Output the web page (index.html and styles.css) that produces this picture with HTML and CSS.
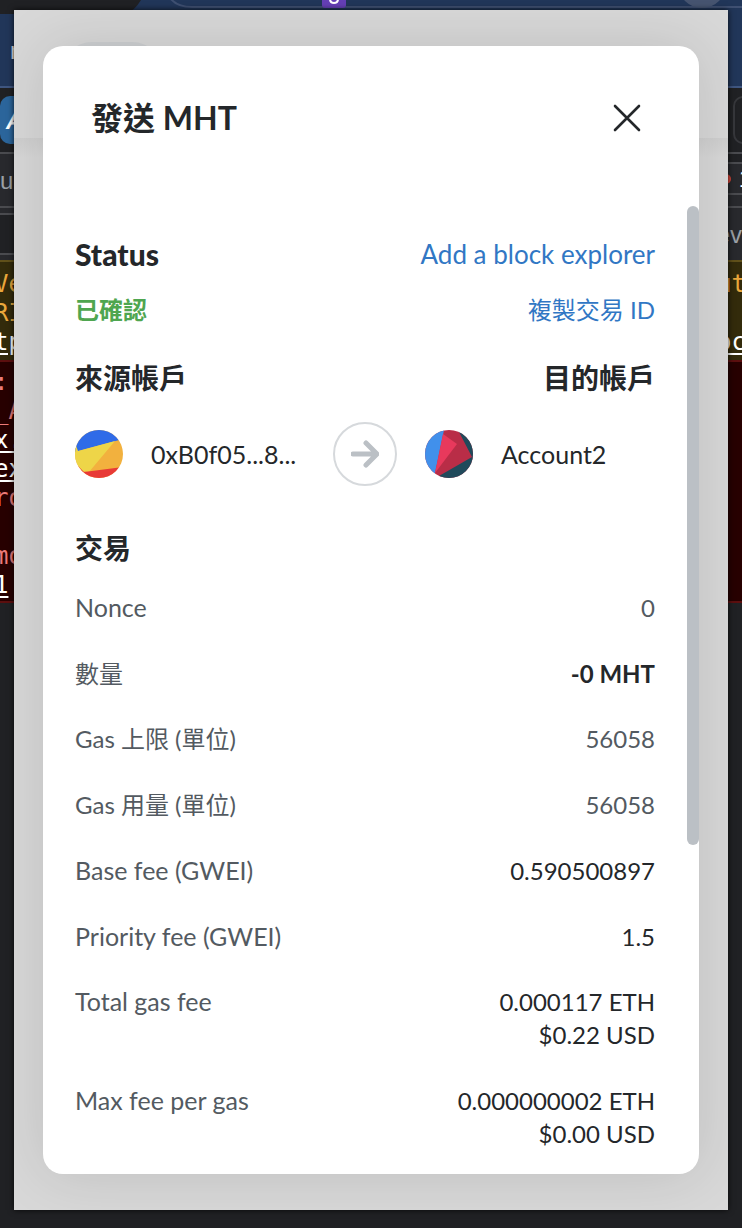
FILE: index.html
```html
<!DOCTYPE html>
<html lang="zh-Hant">
<head>
<meta charset="utf-8">
<meta name="viewport" content="width=device-width, initial-scale=1">
<title>發送 MHT</title>
<link rel="stylesheet" href="styles.css">
</head>
<body>
<div class="screen">
  <div class="desktop" aria-hidden="true">
    <div class="toolbar">
      <svg class="toolbar-top" viewBox="0 0 742 14" width="742" height="14">
        <path d="M0 0H141Q135 10 126 14H0Z" fill="#202124"/>
        <path d="M170 -2Q177 7 192 7H742" fill="none" stroke="#3f5072" stroke-width="2"/>
        <circle cx="702" cy="-16" r="24" fill="#465470"/>
        <rect x="322" y="-10" width="24" height="18" rx="3" fill="#653fb5"/>
        <path d="M330 -1Q330 3 334 3Q338 3 338 -1" fill="none" stroke="#fff" stroke-width="2"/>
      </svg>
      <span class="toolbar-text">n</span>
    </div>
    <div class="bookmarks"><span class="chip-blue">A</span><span class="chip-outline"></span></div>
    <div class="panels">
      <div class="panel-col">
        <div class="pane tall">u</div>
        <div class="pane slim"></div>
        <div class="pane dark"></div>
        <div class="pane slim"></div>
      </div>
      <div class="panel-col right">
        <div class="pane dark thin"></div>
        <div class="pane issues"><span class="dot"></span>1</div>
        <div class="pane strip"></div>
        <div class="pane levels">ev</div>
      </div>
    </div>
    <div class="log warn">
      <div class="log-col"><span>Ve</span><span>RI</span><u>tp</u></div>
      <div class="log-col right"><span>ut</span><span>&nbsp;</span><u>oc</u></div>
    </div>
    <div class="log error">
      <div class="log-col"><span>:</span><span>_A</span><u>x.</u><u>ex</u><span>ro</span><span>&nbsp;</span><span>mo</span><u>1</u></div>
    </div>
  </div>

  <div class="popup">
    <div class="popup-page" aria-hidden="true"><div class="popup-top"><span class="network-pill"></span></div></div>
    <main class="modal">
      <header class="modal-header">
        <h1>發送 MHT</h1>
        <button class="close" type="button" aria-label="關閉">
          <svg viewBox="0 0 28 28" width="28" height="28"><path d="M2 2L26 26M26 2L2 26" fill="none" stroke="#24272a" stroke-width="2.6" stroke-linecap="round"/></svg>
        </button>
      </header>
      <div class="modal-body">
        <div class="content">
          <div class="line status-line"><h2 class="heavy">Status</h2><a class="explorer" href="#explorer">Add a block explorer</a></div>
          <div class="line"><strong class="confirmed">已確認</strong><a href="#copy">複製交易 ID</a></div>
          <div class="line heads"><h2>來源帳戶</h2><h2>目的帳戶</h2></div>
          <div class="accounts">
            <div class="account">
              <svg class="avatar" viewBox="0 0 48 48" width="48" height="48">
                <clipPath id="c1"><circle cx="24" cy="24" r="24"/></clipPath>
                <g clip-path="url(#c1)"><rect width="48" height="48" fill="#f2b13e"/>
                <path d="M0 0H48V9L0 22Z" fill="#2f6be8"/>
                <path d="M0 13L3 21L40 11L14 42L8 41L0 33Z" fill="#eed548"/>
                <path d="M0 33L9 42L48 37V48H0Z" fill="#e83a37"/></g>
              </svg>
              <span>0xB0f05...8...</span>
            </div>
            <div class="arrow">
              <svg viewBox="0 0 28 28" width="28" height="28"><path d="M2 14H24M15 3L26 14L15 25" fill="none" stroke="#bbc0c5" stroke-width="5" stroke-linecap="round" stroke-linejoin="round"/></svg>
            </div>
            <div class="account to">
              <svg class="avatar" viewBox="0 0 48 48" width="48" height="48">
                <clipPath id="c2"><circle cx="24" cy="24" r="24"/></clipPath>
                <g clip-path="url(#c2)"><rect width="48" height="48" fill="#b92d47"/>
                <path d="M0 0H19L10 43L0 48Z" fill="#4190eb"/>
                <path d="M18 4L32 14L10 43Z" fill="#e8395c"/>
                <path d="M33 0L47 27L14 46L16 48H48V0Z" fill="#204a5b"/></g>
              </svg>
              <span>Account2</span>
            </div>
          </div>
          <h2 class="section">交易</h2>
          <dl class="details">
            <div><dt class="latin">Nonce</dt><dd class="muted">0</dd></div>
            <div><dt>數量</dt><dd class="strong">-0 MHT</dd></div>
            <div><dt>Gas 上限 (單位)</dt><dd class="muted">56058</dd></div>
            <div><dt>Gas 用量 (單位)</dt><dd class="muted">56058</dd></div>
            <div><dt class="latin">Base fee (GWEI)</dt><dd>0.590500897</dd></div>
            <div><dt class="latin">Priority fee (GWEI)</dt><dd>1.5</dd></div>
            <div><dt class="latin">Total gas fee</dt><dd>0.000117 ETH<br>$0.22 USD</dd></div>
            <div><dt class="latin">Max fee per gas</dt><dd>0.000000002 ETH<br>$0.00 USD</dd></div>
          </dl>
        </div>
        <div class="scrollbar" aria-hidden="true"><div class="thumb"></div></div>
      </div>
    </main>
  </div>
</div>
</body>
</html>
```
FILE: styles.css
```css
* { box-sizing: border-box; }
body {
  margin: 0;
  background: #202124;
  color: #24272a;
  font-family: Lato, "Noto Sans CJK TC", sans-serif;
  font-size: 24px;
  line-height: 33px;
}
h1, h2, dl, dd { margin: 0; }
a { color: #3177c4; text-decoration: none; }

.screen { display: grid; grid-template-columns: minmax(0, 1fr); min-height: 100vh; }
.desktop, .popup { grid-area: 1 / 1; }

/* browser window behind the popup */
.desktop { overflow: hidden; font-family: "Liberation Sans", sans-serif; color: #9aa0a6; }
.toolbar { height: 88px; background: #213659; border-bottom: 2px solid #3f5680; }
.toolbar-top { display: block; }
.toolbar-text { display: block; padding: 20px 0 0 10px; color: #e8eaed; }
.bookmarks { display: flex; justify-content: space-between; height: 64px; padding: 8px 0; overflow: hidden; }
.chip-blue {
  width: 64px; padding: 8px 6px; border-radius: 10px;
  background: #2b659b; color: #fff; font-weight: bold; font-style: italic;
}
.chip-outline { width: 64px; margin-right: -55px; border: 2px solid #36373b; border-radius: 10px; }
.panels { display: grid; grid-template-columns: 1fr 1fr; background: #28292d; }
.pane { height: 54px; padding-top: 10px; border-top: 2px solid #4a4b4f; }
.pane.slim { height: 7px; padding: 0; }
.pane.dark { height: 40px; background: #202124; }
.pane.thin { height: 10px; padding: 0; }
.pane.issues { display: flex; justify-content: flex-end; align-items: center; gap: 8px; height: 31px; padding: 0; margin-right: -10px; color: #fff; }
.dot { width: 10px; height: 10px; border-radius: 50%; background: #d9483b; }
.pane.strip { height: 13px; padding: 0; }
.panel-col.right { text-align: right; }
.log { display: grid; grid-template-columns: 1fr 1fr; font: 24px/29px "DejaVu Sans Mono", monospace; }
.log-col { display: flex; flex-direction: column; margin-left: -6px; }
.log-col.right { text-align: right; margin-right: -4px; }
.log u { color: #fff; text-underline-offset: 3px; }
.warn { min-height: 100px; padding: 8px 0 3px; background: #332b0b; border-top: 2px solid #60501a; color: #eaa73c; }
.error { min-height: 243px; padding: 6px 0 0; background: #270000; border: solid #5c0f0f; border-width: 2px 0; color: #ec7b79; }

/* wallet popup */
.popup {
  display: grid;
  grid-template-columns: minmax(0, 1fr);
  margin: 10px 14px 18px;
  background: #d8d8d8;
  box-shadow: 0 0 6px rgba(0, 0, 0, .8);
  overflow: hidden;
}
.popup-page, .modal { grid-area: 1 / 1; }
.popup-page { background: linear-gradient(#cfcfcf 128px, #d8d8d8 148px); }
.popup-top { height: 128px; padding: 32px 46px; background: #d8d8d8; }
.network-pill { display: block; width: 104px; height: 64px; border-radius: 32px; background: #cdcfd1; }
.modal {
  display: flex;
  flex-direction: column;
  margin: 36px 29px;
  border-radius: 20px;
  background: #fff;
  box-shadow: 0 0 60px rgba(0, 0, 0, .12);
}
.modal-header { display: flex; justify-content: space-between; padding: 48px 48px 64px; }
h1 { font-size: 32px; line-height: 48px; }
h2 { font-size: 28px; line-height: 40px; }
.heavy { font-size: 30px; font-weight: 900; }
.close { display: grid; place-items: center; width: 48px; height: 48px; padding: 0; border: 0; background: none; }
.modal-body { display: flex; flex: 1; }
.content { display: flex; flex: 1; flex-direction: column; min-width: 0; padding: 28px 32px 24px; }
.line { display: flex; justify-content: space-between; align-items: center; }
.status-line { height: 40px; margin-bottom: 19px; }
.explorer { font-size: 26px; }
.heads { margin: 32px 0 24px; }
.confirmed { color: #4fa650; }
.accounts { display: grid; grid-template-columns: minmax(0, 1fr) 64px minmax(0, 1fr); align-items: center; }
.account { display: flex; align-items: center; gap: 28px; font-size: 25px; white-space: nowrap; }
.account.to { padding-left: 28px; }
.arrow { display: grid; place-items: center; height: 64px; border: 2px solid #d6d9dc; border-radius: 50%; }
.section { margin: 42px 0 23px; }
.details { display: flex; flex: 1; flex-direction: column; justify-content: space-between; }
.details div { display: flex; justify-content: space-between; }
dt, .muted { color: #535a61; }
.latin { font-size: 25px; }
dd { text-align: right; }
.strong { font-weight: bold; }
.scrollbar { width: 12px; }
.thumb { height: 66%; border-radius: 6px; background: #bbc0c5; }
```
